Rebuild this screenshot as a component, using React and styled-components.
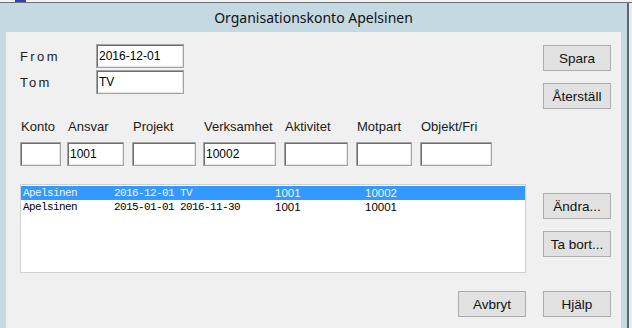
import React from 'react';
import styled, { createGlobalStyle } from 'styled-components';

const GlobalStyle = createGlobalStyle`
  html, body {
    margin: 0;
    padding: 0;
    background: #ececec;
  }
  * {
    box-sizing: border-box;
  }
`;

const rows = [
  { name: 'Apelsinen', from: '2016-12-01', tom: 'TV', ansvar: '1001', verks: '10002', selected: true },
  { name: 'Apelsinen', from: '2015-01-01', tom: '2016-11-30', ansvar: '1001', verks: '10001' },
];

// width = column slot, box = text box width inside it
const fields = [
  { label: 'Konto', width: 40, box: 41, value: '' },
  { label: 'Ansvar', width: 58, box: 57, value: '1001' },
  { label: 'Projekt', width: 64, box: 64, value: '' },
  { label: 'Verksamhet', width: 74, box: 73, value: '10002' },
  { label: 'Aktivitet', width: 65, box: 64, value: '' },
  { label: 'Motpart', width: 57, box: 56, value: '' },
  { label: 'Objekt/Fri', width: 72, box: 72, value: '' },
];

const App = () => {
  return (
    <Screen>
      <GlobalStyle />
      <TopStrip>
        <TaskMark />
      </TopStrip>
      <Window>
        <TitleBar>Organisationskonto Apelsinen</TitleBar>
        <Panel>
          <HeaderSection>
            <DateGrid>
              <SpacedLabel>From</SpacedLabel>
              <TextBox $width={88} value='2016-12-01' readOnly />
              <SpacedLabel>Tom</SpacedLabel>
              <TextBox $width={88} value='TV' readOnly />
            </DateGrid>
            <ButtonStack $offset={1}>
              <Button>Spara</Button>
              <Button>Återställ</Button>
            </ButtonStack>
          </HeaderSection>

          <FieldsRow>
            {fields.map(({ label, width, box, value }) => (
              <Field key={label} $width={width}>
                <FieldLabel>{label}</FieldLabel>
                <TextBox $width={box} value={value} readOnly />
              </Field>
            ))}
          </FieldsRow>

          <ListSection>
            <ListBox>
              {rows.map((row, i) => (
                <ListRow key={i} $selected={row.selected}>
                  <MonoCell>{row.name}</MonoCell>
                  <MonoCell>{row.from}</MonoCell>
                  <MonoCell>{row.tom}</MonoCell>
                  <NumCell>{row.ansvar}</NumCell>
                  <NumCell>{row.verks}</NumCell>
                </ListRow>
              ))}
            </ListBox>
            <ButtonStack $offset={9}>
              <Button>Ändra...</Button>
              <Button>Ta bort...</Button>
            </ButtonStack>
          </ListSection>

          <Footer>
            <Button>Avbryt</Button>
            <Button>Hjälp</Button>
          </Footer>
        </Panel>
      </Window>
    </Screen>
  );
};

export default App;

const Screen = styled.div`
  width: 632px;
  height: 328px;
  display: flex;
  flex-direction: column;
  overflow: hidden;
  background: #e9ebec;
`;

const TopStrip = styled.div`
  height: 3px;
  display: flex;
  padding-left: 15px;
  background: #f3f3f3;
  border-bottom: 1px solid #707070;
`;

const TaskMark = styled.span`
  width: 11px;
  height: 2px;
  background: #2a46b4;
`;

const Window = styled.div`
  flex: 1;
  display: flex;
  flex-direction: column;
  margin-right: 3px;
  padding: 0 6px;
  background: #c5d9e3;
  border-right: 2px solid #5d6870;
`;

const TitleBar = styled.div`
  height: 29px;
  display: flex;
  align-items: center;
  justify-content: center;
  padding-bottom: 1px;
  font-family: 'Noto Sans', 'Open Sans', sans-serif;
  font-size: 14px;
  color: #111;
`;

const Panel = styled.div`
  flex: 1;
  display: flex;
  flex-direction: column;
  padding: 12px 10px 0 14px;
  background: #f0f0f0;
  font-family: 'Liberation Sans', Arial, sans-serif;
  color: #1a1a1a;
`;

const HeaderSection = styled.div`
  display: flex;
  justify-content: space-between;
  align-items: flex-start;
`;

const DateGrid = styled.div`
  display: grid;
  grid-template-columns: 76px 88px;
  grid-auto-rows: 24px;
  row-gap: 2px;
  align-items: center;
`;

const SpacedLabel = styled.span`
  font-size: 13px;
  letter-spacing: 2.4px;
`;

const TextBox = styled.input`
  width: ${({ $width }) => $width}px;
  height: 24px;
  padding: 0 0 0 2px;
  margin: 0;
  font-family: 'Liberation Sans', Arial, sans-serif;
  font-size: 12px;
  color: #000;
  background: #fff;
  border: 1px solid #a3a3a3;
  box-shadow: inset 1px 1px 0 #6f6f6f, inset -1px -1px 0 #e4e4e4;
  outline: none;
`;

const ButtonStack = styled.div`
  display: flex;
  flex-direction: column;
  gap: 12px;
  margin-top: ${({ $offset }) => $offset}px;
`;

const Button = styled.button`
  width: 68px;
  height: 26px;
  padding: 0;
  font-family: 'Liberation Sans', Arial, sans-serif;
  font-size: 13.5px;
  color: #111;
  background: #e1e1e1;
  border: 1px solid #adadad;
`;

const FieldsRow = styled.div`
  display: flex;
  gap: 7px;
  margin-top: 10px;
`;

const Field = styled.div`
  width: ${({ $width }) => $width}px;
  display: flex;
  flex-direction: column;
  gap: 7px;
`;

const FieldLabel = styled.span`
  height: 16px;
  line-height: 16px;
  font-size: 13px;
  white-space: nowrap;
  padding-left: 1px;
`;

const ListSection = styled.div`
  display: flex;
  justify-content: space-between;
  align-items: flex-start;
  margin-top: 18px;
`;

const ListBox = styled.div`
  width: 506px;
  height: 89px;
  padding-top: 1px;
  background: #fff;
  border: 1px solid #d0d0d0;
`;

const ListRow = styled.div`
  height: 14px;
  display: grid;
  grid-template-columns: 91px 66px 95px 90px 1fr;
  align-items: center;
  padding-left: 2px;
  background: ${({ $selected }) => ($selected ? '#3399ff' : 'transparent')};
  color: ${({ $selected }) => ($selected ? '#eef5ff' : '#000')};
`;

const MonoCell = styled.span`
  font-family: 'Liberation Mono', 'Courier New', monospace;
  font-size: 11px;
  letter-spacing: -0.6px;
  white-space: nowrap;
`;

const NumCell = styled.span`
  font-family: 'Liberation Sans', Arial, sans-serif;
  font-size: 11.5px;
  white-space: nowrap;
`;

const Footer = styled.div`
  display: flex;
  justify-content: flex-end;
  gap: 17px;
  margin-top: 18px;
`;
